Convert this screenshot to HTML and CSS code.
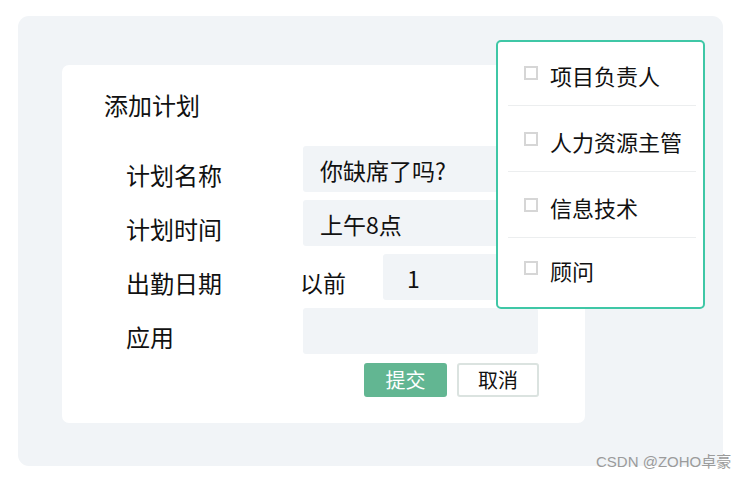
FILE: index.html
```html
<!DOCTYPE html>
<html lang="zh">
<head>
<meta charset="utf-8">
<link rel="stylesheet" href="styles.css">
</head>
<body>
<div class="panel">
  <div class="card">
    <div class="title">添加计划</div>
    <div class="form">
      <div class="label">计划名称</div>
      <div class="field"><div class="input">你缺席了吗?</div></div>
      <div class="label">计划时间</div>
      <div class="field"><div class="input">上午8点</div></div>
      <div class="label">出勤日期</div>
      <div class="field"><span class="prefix">以前</span><div class="input num">1</div></div>
      <div class="label">应用</div>
      <div class="field"><div class="input"></div></div>
    </div>
    <div class="actions">
      <button class="btn primary">提交</button>
      <button class="btn">取消</button>
    </div>
  </div>
  <div class="popover">
    <div class="item"><span class="box"></span><span>项目负责人</span></div>
    <div class="item"><span class="box"></span><span>人力资源主管</span></div>
    <div class="item"><span class="box"></span><span>信息技术</span></div>
    <div class="item last"><span class="box"></span><span>顾问</span></div>
  </div>
</div>
<div class="mark">CSDN @ZOHO卓豪</div>
</body>
</html>
```
FILE: styles.css
```css
html, body {
  margin: 0;
  padding: 0;
  background: #ffffff;
}
body {
  font-family: "Noto Sans CJK SC", "Noto Sans", sans-serif;
  color: #111111;
  width: 745px;
  height: 482px;
  position: relative;
  overflow: hidden;
}
.panel {
  position: relative;
  margin: 16px 0 0 18px;
  width: 705px;
  height: 450px;
  box-sizing: border-box;
  background: #f1f4f7;
  border-radius: 11px;
  padding: 49px 0 0 44px;
}
.card {
  width: 523px;
  height: 358px;
  box-sizing: border-box;
  background: #ffffff;
  border-radius: 7px;
  padding: 25px 0 0 42px;
}
.title {
  font-size: 24px;
  line-height: 30px;
  height: 30px;
}
.form {
  margin: 26px 0 0 22px;
  display: grid;
  grid-template-columns: 177px 235px;
  grid-auto-rows: 46px;
  row-gap: 8px;
}
.label {
  font-size: 24px;
  line-height: 30px;
  padding-top: 14px;
}
.field {
  display: flex;
  align-items: center;
}
.input {
  flex: 1;
  height: 46px;
  box-sizing: border-box;
  background: #f1f4f7;
  border-radius: 3px;
  padding-left: 17px;
  font-size: 23px;
  line-height: 48px;
}
.input.num {
  padding-left: 24px;
}
.prefix {
  font-size: 23px;
  line-height: 30px;
  width: 83px;
  flex: none;
  margin-left: -3px;
  padding-top: 10px;
}
.actions {
  display: flex;
  justify-content: flex-end;
  gap: 10px;
  width: 413px;
  margin: 9px 0 0 22px;
}
.btn {
  font-family: "Noto Sans CJK SC", sans-serif;
  font-size: 20px;
  width: 82px;
  height: 34px;
  padding: 0;
  border-radius: 3px;
  border: 2px solid #dbe3e0;
  background: #ffffff;
  color: #111;
  line-height: 28px;
}
.btn.primary {
  width: 83px;
  background: #62b692;
  border-color: #62b692;
  color: #ffffff;
}
.popover {
  position: absolute;
  left: 478px;
  top: 24px;
  width: 209px;
  height: 269px;
  box-sizing: border-box;
  border: 2px solid #3fc7a6;
  border-radius: 5px;
  background: #ffffff;
  padding: 0 7px 0 10px;
}
.item {
  height: 66px;
  box-sizing: border-box;
  border-bottom: 1px solid #eceeef;
  display: flex;
  align-items: flex-start;
  padding: 20px 0 0 16px;
  font-size: 22px;
  line-height: 30px;
}
.item:first-child {
  height: 64px;
  padding-top: 18px;
}
.item.last {
  border-bottom: none;
  padding-top: 17px;
}
.box {
  width: 14px;
  height: 14px;
  box-sizing: border-box;
  border: 2px solid #d6d6d6;
  margin: 6px 12px 0 0;
  flex: none;
}
.mark {
  position: absolute;
  left: 596px;
  top: 452px;
  font-family: "Liberation Sans", "Noto Sans CJK SC", sans-serif;
  font-size: 15px;
  line-height: 20px;
  color: #9b9b9b;
}
```
